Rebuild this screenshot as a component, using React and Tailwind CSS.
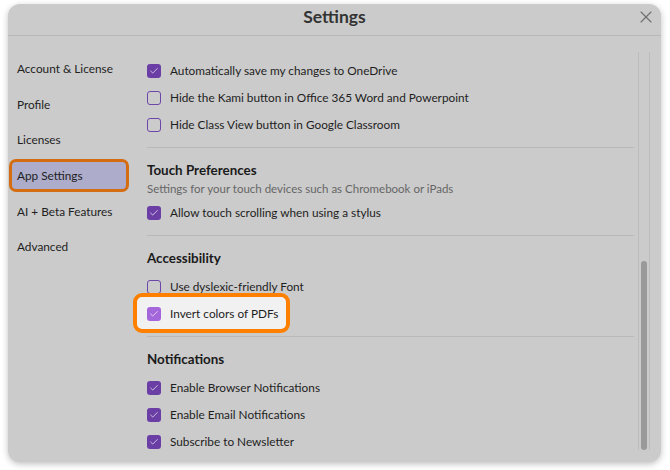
import React from 'react';
import { X, Check } from 'lucide-react';

const navItems = ['Account & License', 'Profile', 'Licenses', 'App Settings', 'AI + Beta Features', 'Advanced'];

const sections = [
  {
    rows: [
      { label: 'Automatically save my changes to OneDrive', checked: true },
      { label: 'Hide the Kami button in Office 365 Word and Powerpoint', checked: false },
      { label: 'Hide Class View button in Google Classroom', checked: false },
    ],
  },
  {
    title: 'Touch Preferences',
    subtitle: 'Settings for your touch devices such as Chromebook or iPads',
    rows: [{ label: 'Allow touch scrolling when using a stylus', checked: true }],
  },
  {
    title: 'Accessibility',
    rows: [
      { label: 'Use dyslexic-friendly Font', checked: false },
      { label: 'Invert colors of PDFs', checked: true, focus: true },
    ],
  },
  {
    title: 'Notifications',
    rows: [
      { label: 'Enable Browser Notifications', checked: true },
      { label: 'Enable Email Notifications', checked: true },
      { label: 'Subscribe to Newsletter', checked: true },
    ],
  },
];

const Checkbox = ({ checked, focus }) => {
  if (checked) {
    return (
      <span className={`w-[14px] h-[14px] rounded-[3px] flex items-center justify-center shrink-0 ${focus ? 'bg-[#a466db]' : 'bg-[#6a3ea4]'}`}>
        <Check size={10} strokeWidth={1.6} className="text-white" />
      </span>
    );
  }
  return <span className="w-[14px] h-[14px] rounded-[3px] border-[1.5px] border-[#6c46a8] shrink-0" />;
};

const Row = ({ label, checked, focus }) => (
  <div className="relative h-[27px] flex items-center">
    {focus && (
      <div className="absolute left-[-14px] top-[-7px] w-[157px] h-[40px] rounded-[9px] border-[4px] border-[#ff8000] bg-[#f1f1f1]" />
    )}
    <div className="relative flex items-center gap-[9px]">
      <Checkbox checked={checked} focus={focus} />
      <span className="text-[11.8px] text-[#1e1e1e]">{label}</span>
    </div>
  </div>
);

export default function App() {
  return (
    <div className="min-h-screen bg-white pt-[4px] pl-[8px]" style={{ fontFamily: 'Lato, "Open Sans", sans-serif' }}>
      <div className="w-[653px] h-[458px] rounded-[12px] bg-[#cbcbcb] shadow-[0_2px_6px_rgba(0,0,0,0.25)] flex flex-col overflow-hidden">
        {/* header */}
        <div className="relative h-[32px] flex items-center justify-center pb-[4px] border-b border-[#b9b9b9]">
          <h1 className="text-[17.5px] font-bold text-[#333]">Settings</h1>
          <button className="absolute right-[5px] top-[3px] w-[20px] h-[20px] flex items-center justify-center text-[#707070]">
            <X size={20} strokeWidth={1.4} />
          </button>
        </div>

        <div className="flex flex-1 min-h-0">
          {/* sidebar */}
          <nav className="w-[139px] shrink-0 pl-[1px] pt-[16.5px] flex flex-col gap-[2.6px]">
            {navItems.map((item) => (
              <div
                key={item}
                className={`w-[120px] h-[33px] flex items-center px-[5px] rounded-[7px] border-[3px] text-[11.8px] text-[#1e1e1e] ${item === 'App Settings' ? 'bg-[#adacca] border-[#d46c12]' : 'border-transparent'}`}
              >
                {item}
              </div>
            ))}
          </nav>

          {/* settings list */}
          <div className="w-[487px] pt-[21px]">
            {sections.map((section, i) => (
              <div key={i} className={i > 0 ? 'border-t border-[#b9b9b9] pt-[12px] mt-[9px]' : ''}>
                {section.title && (
                  <h2 className="h-[20px] flex items-center text-[13.4px] font-bold text-[#1a1a1a]">{section.title}</h2>
                )}
                {section.subtitle && (
                  <p className="h-[17px] flex items-center text-[11.5px] text-[#666]">{section.subtitle}</p>
                )}
                <div className={section.subtitle ? 'mt-[2px]' : section.title ? 'mt-[5px]' : ''}>
                  {section.rows.map((row) => (
                    <Row key={row.label} {...row} />
                  ))}
                </div>
              </div>
            ))}
          </div>

          {/* scrollbar */}
          <div className="ml-[4px] mt-[16px] mb-[12px] w-[12px] border-x border-[#bdbdbd] flex flex-col justify-end px-[2px]">
            <div className="h-[189px] rounded-full bg-[#9a9a9a]" />
          </div>
        </div>
      </div>
    </div>
  );
}
